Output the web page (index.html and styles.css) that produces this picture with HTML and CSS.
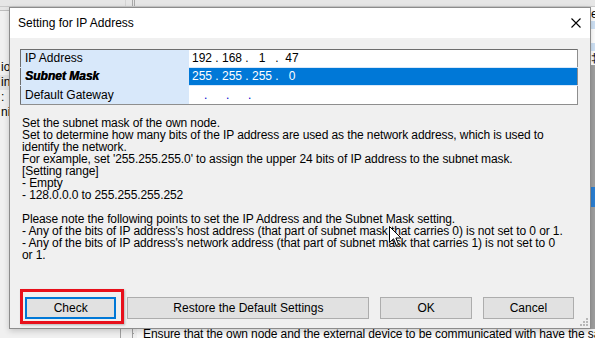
FILE: index.html
```html
<!DOCTYPE html>
<html lang="en">
<head>
    <meta charset="UTF-8">
    <title>Setting for IP Address</title>
    <link rel="stylesheet" href="styles.css">
</head>
<body>

    <!-- Main window behind the dialog -->
    <div class="backdrop">
        <div class="bg-top">
            <span class="bg-top-a"></span>
            <span class="bg-top-b"></span>
            <span class="bg-top-c"></span>
        </div>
        <div class="bg-left">
            <div class="bg-left-head"></div>
            <ul class="bg-list">
                <li>io</li>
                <li class="hot">in</li>
                <li>:</li>
                <li>nic</li>
            </ul>
        </div>
        <div class="bg-mid"></div>
        <div class="bg-right">
            <span class="r-white">e</span>
            <span class="r-blue"></span>
            <span class="r-white"></span>
            <span class="r-blue"></span>
            <span class="r-white">‡</span>
            <span class="r-gray"></span>
            <span class="r-sel"></span>
            <span class="r-gray"></span>
        </div>
        <div class="bg-bottom">
            <span class="bg-bottom-pad"></span>
            <span class="bg-bottom-rule"></span>
            <span class="bg-bottom-text">Ensure that the own node and the external device to be communicated with have the same</span>
        </div>
    </div>

    <!-- Dialog window -->
    <div class="dialog">
        <div class="titlebar">
            <span class="title">Setting for IP Address</span>
            <svg class="close" width="10" height="10" viewBox="0 0 10 10">
                <path d="M0.5 0.5 L9.5 9.5 M9.5 0.5 L0.5 9.5" stroke="#000" stroke-width="1.1" fill="none"/>
            </svg>
        </div>

        <div class="dialog-body">
            <table class="ip-grid">
                <tr>
                    <td class="label">IP Address</td>
                    <td class="value">
                        <span class="oct">192</span><span class="dot">.</span><span class="oct">168</span><span class="dot">.</span><span class="oct">1</span><span class="dot">.</span><span class="oct">47</span>
                    </td>
                </tr>
                <tr class="selected">
                    <td class="label"><b>Subnet Mask</b></td>
                    <td class="value">
                        <span class="oct">255</span><span class="dot">.</span><span class="oct">255</span><span class="dot">.</span><span class="oct">255</span><span class="dot">.</span><span class="oct">0</span>
                    </td>
                </tr>
                <tr>
                    <td class="label">Default Gateway</td>
                    <td class="value gateway">
                        <span class="gdot">.</span><span class="gdot">.</span><span class="gdot">.</span>
                    </td>
                </tr>
            </table>

            <div class="help">
                Set the subnet mask of the own node.<br>
                Set to determine how many bits of the IP address are used as the network address, which is used to<br>
                identify the network.<br>
                For example, set '255.255.255.0' to assign the upper 24 bits of IP address to the subnet mask.<br>
                [Setting range]<br>
                - Empty<br>
                - 128.0.0.0 to 255.255.255.252<br>
                <br>
                Please note the following points to set the IP Address and the Subnet Mask setting.<br>
                - Any of the bits of IP address's host address (that part of subnet mask that carries 0) is not set to 0 or 1.<br>
                - Any of the bits of IP address's network address (that part of subnet mask that carries 1) is not set to 0<br>
                or 1.
            </div>

            <div class="buttons">
                <button class="btn btn-default">Check</button>
                <button class="btn btn-wide">Restore the Default Settings</button>
                <button class="btn">OK</button>
                <button class="btn">Cancel</button>
            </div>
        </div>

        <!-- red highlight drawn over the Check button -->
        <div class="mark"></div>

        <svg class="grip" width="8" height="8" viewBox="0 0 8 8">
            <rect x="6" y="0" width="2" height="2" fill="#b8b8b8"/>
            <rect x="3" y="3" width="2" height="2" fill="#b8b8b8"/>
            <rect x="6" y="3" width="2" height="2" fill="#b8b8b8"/>
            <rect x="0" y="6" width="2" height="2" fill="#b8b8b8"/>
            <rect x="3" y="6" width="2" height="2" fill="#b8b8b8"/>
            <rect x="6" y="6" width="2" height="2" fill="#b8b8b8"/>
        </svg>
    </div>

    <!-- mouse pointer -->
    <svg class="cursor" width="13" height="21" viewBox="0 0 13 21">
        <path d="M0.5 0.5 L0.5 16.5 L4.5 12.8 L7.3 19.5 L9.6 18.5 L6.9 12 L12 12 Z" fill="#fff" stroke="#000" stroke-width="1" stroke-linejoin="miter"/>
    </svg>

</body>
</html>
```

FILE: styles.css
```css
body {
    margin: 0;
    width: 595px;
    height: 338px;
    overflow: hidden;
    position: relative;
    background: #f0f0f0;
    font-family: "Liberation Sans", Arial, sans-serif;
    font-size: 12px;
    color: #000;
}

/* ---------- window behind ---------- */

.backdrop {
    display: grid;
    grid-template-columns: 9px 1fr 4px;
    grid-template-rows: 7px 1fr 9px;
    width: 595px;
    height: 338px;
}

.bg-top {
    grid-column: 1 / 4;
    display: flex;
    background: #e6e6e6;
    border-bottom: 1px solid #c9c9c9;
}

.bg-top-a {
    width: 125px;
    border-right: 1px solid #d4d4d4;
}

.bg-top-b {
    width: 6px;
    border-right: 1px solid #a8a8a8;
}

.bg-top-c {
    width: 1px;
    border-right: 1px solid #a8a8a8;
}

.bg-left {
    background: #f0f0f0;
    overflow: hidden;
}

.bg-left-head {
    height: 3px;
    background: #e6e6e6;
    border-bottom: 1px solid #bdbdbd;
}

.bg-list {
    list-style: none;
    margin: 49px 0 0 0;
    padding: 0;
}

.bg-list li {
    height: 15px;
    line-height: 15px;
    padding-left: 1px;
    white-space: nowrap;
}

.bg-list li.hot {
    background: #e3e3e3;
}

.bg-mid {
    background: #f0f0f0;
}

.bg-right {
    display: flex;
    flex-direction: column;
    overflow: hidden;
    background: #f0f0f0;
}

.bg-right span {
    display: block;
    overflow: hidden;
    line-height: 14px;
}

.r-white {
    height: 14px;
    background: #fff;
}

.r-blue {
    height: 8px;
    background: #cfe2f6;
}

.r-gray {
    flex: 1;
    background: #a0a0a0;
}

.r-sel {
    height: 20px;
    background: #2b7fd3;
}

.bg-bottom {
    grid-column: 1 / 4;
    display: flex;
    overflow: hidden;
}

.bg-bottom-pad {
    width: 120px;
    flex: none;
    border-right: 1px solid #a0a0a0;
}

.bg-bottom-rule {
    width: 11px;
    flex: none;
    border-right: 1px solid #a0a0a0;
    margin-right: 4px;
    box-shadow: 5px 0 0 -4px #a0a0a0;
}

.bg-bottom-text {
    flex: none;
    background: #f7f7f7;
    padding-left: 6px;
    white-space: nowrap;
    line-height: 12px;
    margin-top: -1px;
    letter-spacing: -0.1px;
}

/* ---------- dialog ---------- */

.dialog {
    position: absolute;
    left: 9px;
    top: 7px;
    width: 582px;
    height: 322px;
    box-sizing: border-box;
    border: 1px solid #8c8c8c;
    background: #f0f0f0;
    box-shadow: 0 2px 6px rgba(0, 0, 0, 0.18);
    display: flex;
    flex-direction: column;
}

.titlebar {
    height: 30px;
    flex: none;
    background: #fff;
    display: flex;
    align-items: center;
    justify-content: space-between;
    padding: 0 9px 0 8px;
}

.title {
    font-size: 12px;
}

.dialog-body {
    flex: 1;
    display: flex;
    flex-direction: column;
    padding: 11px 16px 9px 10px;
}

/* grid of the addresses */

.ip-grid {
    width: 558px;
    border-collapse: collapse;
    border: 1px solid #8e8e8e;
    border-top-color: #6e6e6e;
    border-left-color: #6e6e6e;
    background: #fff;
    table-layout: fixed;
}

.ip-grid td {
    height: 17px;
    padding: 0;
    border-bottom: 1px solid #d8e8fa;
    line-height: 17px;
    white-space: nowrap;
}

.ip-grid tr:last-child td {
    border-bottom: none;
    height: 18px;
}

.ip-grid .label {
    width: 164px;
    padding-left: 4px;
    background: #d8e8fa;
}

.ip-grid .label b {
    font-style: italic;
    font-weight: bold;
    text-shadow: 0.5px 0 0 #000;
}

.ip-grid .value {
    padding-left: 2px;
}

.ip-grid .selected .value {
    background: #0078d7;
    color: #fff;
}

.oct {
    display: inline-block;
    width: 22px;
    text-align: center;
}

.dot {
    display: inline-block;
    width: 8px;
    text-align: center;
}

.gateway {
    padding-left: 15px !important;
}

.gdot {
    display: inline-block;
    width: 22px;
    color: #0000d0;
}

/* help text */

.help {
    margin-top: 12px;
    padding-left: 2px;
    line-height: 12px;
    white-space: nowrap;
    letter-spacing: -0.1px;
}

/* buttons */

.buttons {
    margin-top: auto;
    display: flex;
    gap: 11px;
    padding-left: 5px;
}

.btn {
    width: 92px;
    height: 22px;
    margin: 0;
    padding: 0;
    background: #e1e1e1;
    border: 1px solid #adadad;
    font-family: inherit;
    font-size: 12px;
    color: #000;
}

.btn-default {
    border: 2px solid #0078d7;
}

.btn-wide {
    width: 244px;
}

.mark {
    position: absolute;
    left: 10px;
    top: 281px;
    width: 104px;
    height: 35px;
    box-sizing: border-box;
    border: 3px solid #e8101b;
    box-shadow: 1px 1px 2px rgba(0, 0, 0, 0.25);
}

.grip {
    position: absolute;
    right: 2px;
    bottom: 2px;
}

.cursor {
    position: absolute;
    left: 389px;
    top: 226px;
}
```
